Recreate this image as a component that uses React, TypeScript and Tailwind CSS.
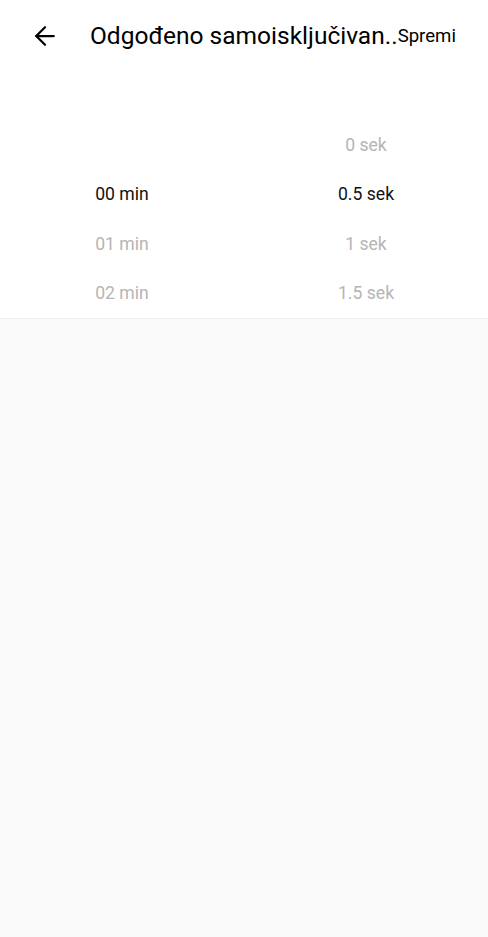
import { ArrowLeft } from "lucide-react";

const MINUTES = ["", "00 min", "01 min", "02 min"];
const SECONDS = ["0 sek", "0.5 sek", "1 sek", "1.5 sek"];

export default function App() {
  return (
    <div className="min-h-[937px] bg-[#f9f9f9] font-['Roboto',sans-serif]">
      <div className="bg-white border-b border-[#f0f0f0]">
        <header className="flex h-[72px] items-center">
          <button className="ml-[30px] flex h-[30px] w-[30px] items-center justify-center text-black">
            <ArrowLeft size={30} strokeWidth={1.8} />
          </button>
          <h1 className="ml-[30px] whitespace-nowrap text-[24.5px] leading-none text-black">
            Odgođeno samoisključivan..
          </h1>
          <span className="text-[18.6px] leading-none text-black">Spremi</span>
        </header>

        <div className="grid grid-cols-2 pt-[48px]">
          <div className="flex flex-col">
            {MINUTES.map((m, i) => (
              <div
                key={i}
                className={`flex h-[49.5px] items-center justify-center text-[17.6px] ${
                  i === 1 ? "text-[#111]" : "text-[#b5b5b5]"
                }`}
              >
                {m}
              </div>
            ))}
          </div>
          <div className="flex flex-col">
            {SECONDS.map((s, i) => (
              <div
                key={s}
                className={`flex h-[49.5px] items-center justify-center text-[17.6px] ${
                  i === 1 ? "text-[#111]" : "text-[#b5b5b5]"
                }`}
              >
                {s}
              </div>
            ))}
          </div>
        </div>
      </div>
    </div>
  );
}
